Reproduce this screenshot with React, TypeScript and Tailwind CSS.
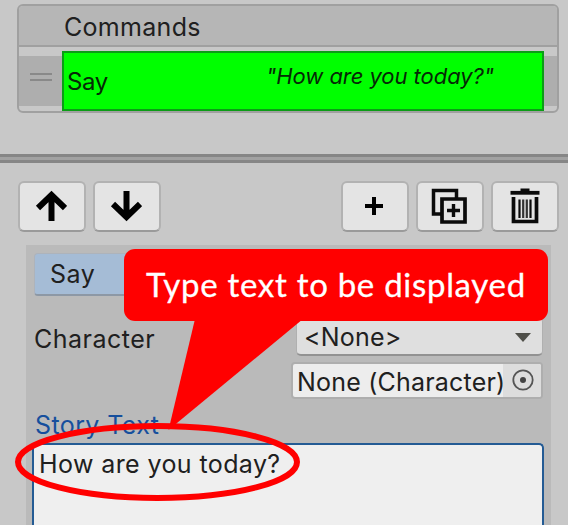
import React from "react";

function ToolButton({ children, label }: { children: React.ReactNode; label: string }) {
  return (
    <button
      aria-label={label}
      className="flex h-[51px] w-[68px] items-center justify-center rounded-[6px] border-2 border-[#b2b2b2] border-b-[#9a9a9a] bg-[#e4e4e4] pr-[2px] pb-[2px]"
    >
      {children}
    </button>
  );
}

function CommandList() {
  return (
    <section className="mr-[9px] ml-[17px] h-[109px] overflow-hidden rounded-[6px] border-2 border-[#a0a0a0]">
      <header className="flex h-[41px] items-center border-b-2 border-[#a0a0a0] bg-[#b6b6b6] pl-[45px]">
        <span className="pt-[4px] text-[25px] leading-none tracking-[0.3px]">Commands</span>
      </header>
      <div className="flex h-[64px] items-center pt-[4px]">
        <div className="flex h-[50px] w-[43px] shrink-0 flex-col items-center justify-center gap-[4px] bg-[#aeaeae] pb-[8px]">
          <i className="h-[2px] w-[22px] bg-[#898989]" />
          <i className="h-[2px] w-[22px] bg-[#898989]" />
        </div>
        <div className="flex h-[60px] w-[482px] shrink-0 justify-between border-2 border-[#0b9d16] bg-[#00ff00] pr-[48px] pl-[3px] text-[#062806]">
          <span className="pt-[15px] text-[24px] leading-[28px] tracking-[-0.4px]">Say</span>
          <span className="pt-[9px] text-[22px] leading-[28px] tracking-[-0.05px] italic">"How are you today?"</span>
        </div>
        <div className="h-[50px] flex-1 bg-[#aeaeae]" />
      </div>
    </section>
  );
}

function Toolbar() {
  return (
    <div className="flex justify-between pt-[18px] pr-[9px] pl-[18px]">
      <div className="flex gap-[7px]">
        <ToolButton label="Move up">
          <svg width="32" height="32" viewBox="0 0 32 32" fill="none" stroke="#000" strokeWidth="6">
            <path d="M16.500 31V5M3 18 16.500 5l13.500 13" />
          </svg>
        </ToolButton>
        <ToolButton label="Move down">
          <svg width="32" height="32" viewBox="0 0 32 32" fill="none" stroke="#000" strokeWidth="6">
            <path d="M16.500 1v26M3 14 16.500 27 30 14" />
          </svg>
        </ToolButton>
      </div>
      <div className="flex gap-[7px]">
        <ToolButton label="Add">
          <svg width="18" height="18" viewBox="0 0 18 18" stroke="#000" strokeWidth="4">
            <path d="M9 0v18M0 9h18" />
          </svg>
        </ToolButton>
        <ToolButton label="Duplicate">
          <svg width="36" height="36" viewBox="0 0 36 36" fill="none" stroke="#0a0a0a">
            <path d="M10 26H2.500V2.500h23V10" strokeWidth="3.500" />
            <path d="M11 11h23v23H11z" strokeWidth="3.700" />
            <path d="M22.500 16v13M16 22.500h13" strokeWidth="3.400" />
          </svg>
        </ToolButton>
        <ToolButton label="Delete">
          <svg width="30" height="36" viewBox="0 0 30 36" fill="none" stroke="#0a0a0a" className="ml-[2px]">
            <path d="M0.500 4.800h29" strokeWidth="3.800" />
            <path d="M10.500 2.500h9" strokeWidth="4" />
            <path d="M3.500 9v24.500h23V9" strokeWidth="3.700" />
            <path d="M9.500 11.500v18.500M20.500 11.500v18.500" strokeWidth="2.200" />
            <path d="M13.200 11.500v18.500M16.800 11.500v18.500" stroke="#333" strokeWidth="2.200" />
          </svg>
        </ToolButton>
      </div>
    </div>
  );
}

function Inspector() {
  return (
    <section className="mt-[13px] mr-[17px] ml-[26px] h-[280px] bg-[#bababa] pt-[8px] pr-[8px] pl-[8px]">
      <div className="flex h-[43px] w-[120px] items-center rounded-[4px] border border-[#adb3bb] border-b-2 border-b-[#8d98a5] bg-[#a5bcd6] pt-[2px] pl-[15px] text-[25px] tracking-[0.5px]">
        Say
      </div>
      <div className="mt-[21px] flex h-[39px] justify-between">
        <span className="pt-[7px] text-[25px] leading-[30px] tracking-[0.5px]">Character</span>
        <div className="flex w-[247px] items-center justify-between rounded-[5px] border border-[#b0b0b0] border-b-2 border-b-[#929292] bg-[#dfdfdf] pr-[11px] pl-[7px] text-[25px]">
          <span className="pt-[3px] leading-none tracking-[0.2px]">&lt;None&gt;</span>
          <svg width="16" height="10" viewBox="0 0 16 10" fill="#50504a" className="mt-[3px]"><path d="M0 0h16L8 9z" /></svg>
        </div>
      </div>
      <div className="mt-[6px] ml-auto flex h-[37px] w-[252px] overflow-hidden rounded-[4px] border-2 border-[#aeaeae] bg-[#ededed]">
        <span className="w-[210px] pt-[3px] pl-[4px] text-[25px] leading-[30px] tracking-[0.2px] whitespace-nowrap">None (Character)</span>
        <div className="flex flex-1 items-center justify-center bg-[#dddddd] pb-px pl-px">
          <svg width="22" height="22" viewBox="0 0 22 22">
            <circle cx="11" cy="11" r="9.700" fill="none" stroke="#555" strokeWidth="1.800" />
            <circle cx="11" cy="11" r="3" fill="#444" />
          </svg>
        </div>
      </div>
      <div className="mt-[11px] h-[33px] pl-px text-[25px] leading-[30px] tracking-[0.4px] text-[#164f9d]">Story Text</div>
      <div className="mr-[-1px] -ml-[2px] h-[90px] rounded-t-[5px] border-[2.500px] border-b-0 border-[#245b94] bg-[#efefef] pt-[4px] pl-[5px] text-[25px] leading-[30px] tracking-[0.4px]">
        How are you today?
      </div>
    </section>
  );
}

function Callout() {
  return (
    <>
      <svg className="absolute top-0 left-0" width="568" height="525" viewBox="0 0 568 525">
        <path d="M195 319 168.500 430 303 319z" fill="#f00" />
        <ellipse cx="157.500" cy="462" rx="139.500" ry="36" fill="none" stroke="#f00" strokeWidth="6" />
      </svg>
      <div className="absolute top-[249px] left-[124px] flex h-[72px] w-[424px] items-center rounded-[11px] bg-[#ff0000] pb-px pl-[22px] font-['Lato',sans-serif] text-[33px] leading-none tracking-[0.7px] whitespace-nowrap text-white [-webkit-text-stroke:0.3px_white]">
        <span>Type text to be displayed</span>
      </div>
    </>
  );
}

export default function App() {
  return (
    <main className="relative h-[525px] w-[568px] overflow-hidden bg-[#c8c8c8] pt-[4px] font-['Inter',sans-serif] text-[#202020]">
      <CommandList />
      <div className="mt-[41px] h-[9px] border-y-[3px] border-[#868686] bg-[#a2a2a2]" />
      <Toolbar />
      <Inspector />
      <Callout />
    </main>
  );
}
